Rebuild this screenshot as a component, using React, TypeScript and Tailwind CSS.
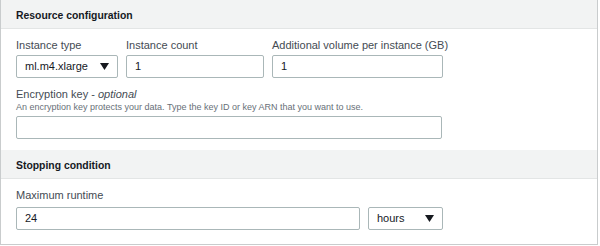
import React from "react";

const font = { fontFamily: '"Liberation Sans", Arial, sans-serif' };

const Caret = () => (
  <svg width="9" height="7" viewBox="0 0 9 7" className="shrink-0">
    <path d="M0 0 H9 L4.5 7 Z" fill="#16191f" />
  </svg>
);

const Select = ({ value, className }: { value: string; className: string }) => (
  <div
    className={`h-[23px] border border-[#aab7b8] rounded-[2px] bg-white flex items-center justify-between pl-[8px] pr-[8px] text-[11px] text-[#16191f] ${className}`}
  >
    <span>{value}</span>
    <Caret />
  </div>
);

const Input = ({ value, className }: { value?: string; className: string }) => (
  <div
    className={`h-[23px] border border-[#aab7b8] rounded-[2px] bg-white flex items-center pl-[8px] text-[11px] text-[#16191f] ${className}`}
  >
    {value}
  </div>
);

const Label = ({ children, className = "mb-[3px]" }: { children: React.ReactNode; className?: string }) => (
  <div className={`text-[11px] text-[#444b53] leading-[13px] ${className}`}>{children}</div>
);

const Header = ({ title }: { title: string }) => (
  <div className="h-[29px] shrink-0 bg-[#f2f3f3] border-b border-[#e3e5e5] flex items-center px-[15px] pt-[3px] text-[10.4px] font-bold text-[#16191f]">
    {title}
  </div>
);

export default function App() {
  return (
    <div className="w-[600px] h-[246px] bg-white overflow-hidden" style={font}>
      <div className="w-[598px] h-[245px] border-l border-r border-b border-[#c9cccd] flex flex-col">
        <Header title="Resource configuration" />
        <div className="px-[15px] pt-[10px] pb-[11px]">
          <div className="flex gap-[8px]">
            <div>
              <Label>Instance type</Label>
              <Select value="ml.m4.xlarge" className="w-[102px]" />
            </div>
            <div>
              <Label>Instance count</Label>
              <Input value="1" className="w-[138px]" />
            </div>
            <div>
              <Label>Additional volume per instance (GB)</Label>
              <Input value="1" className="w-[171px]" />
            </div>
          </div>
          <div className="mt-[10px]">
            <Label className="">
              Encryption key - <i>optional</i>
            </Label>
            <div className="text-[9px] text-[#687078] leading-[12px] mb-[3px]">
              An encryption key protects your data. Type the key ID or key ARN that you want to use.
            </div>
            <Input className="w-[426px]" />
          </div>
        </div>
        <Header title="Stopping condition" />
        <div className="px-[15px] pt-[10px]">
          <Label className="mb-[5px]">Maximum runtime</Label>
          <div className="flex gap-[8px]">
            <Input value="24" className="w-[344px]" />
            <Select value="hours" className="w-[75px]" />
          </div>
        </div>
      </div>
    </div>
  );
}
